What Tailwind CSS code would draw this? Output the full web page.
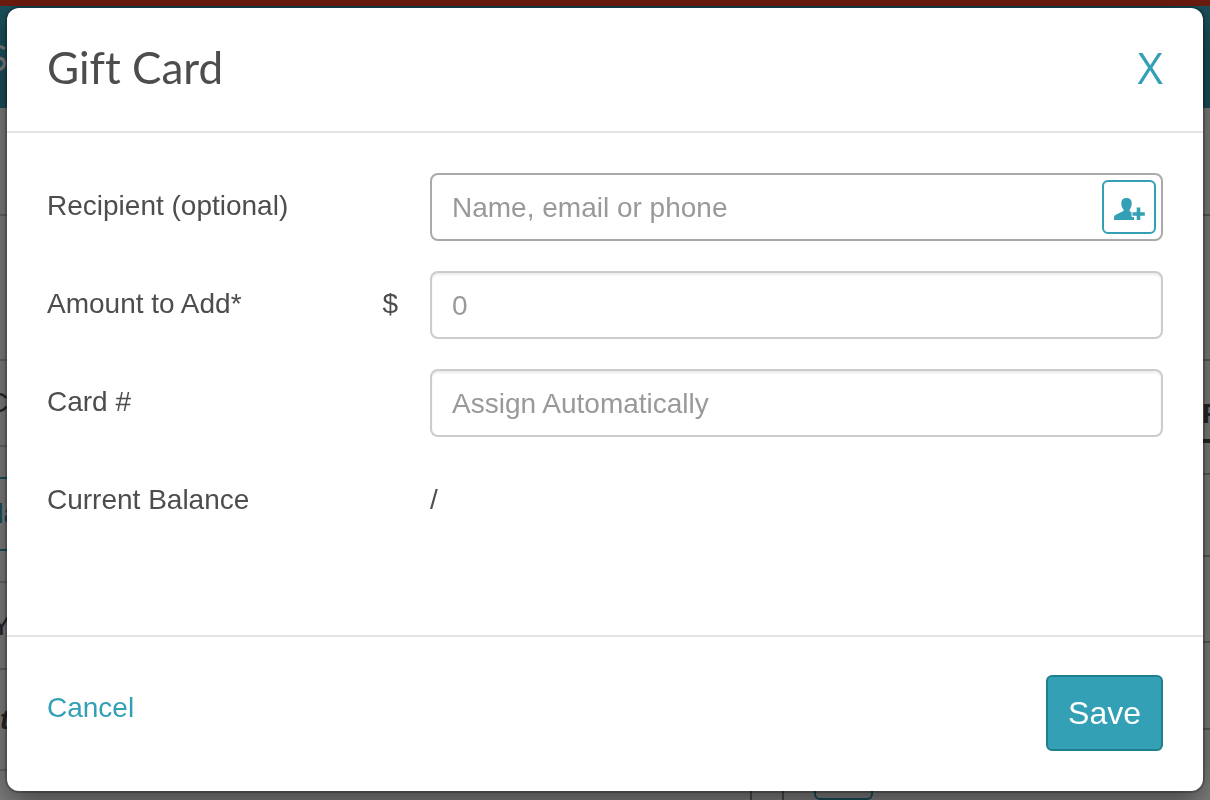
<!DOCTYPE html>
<html lang="en">
<head>
    <meta charset="UTF-8">
    <meta name="viewport" content="width=device-width, initial-scale=1.0">
    <title>Gift Card</title>
    <script src="https://cdn.jsdelivr.net/npm/@tailwindcss/browser@4"></script>
</head>
<body class="h-screen overflow-hidden bg-white font-['Liberation_Sans',Arial,sans-serif] text-[28px] leading-[42px] text-[#4d4d4d]">

    <!-- Page behind the dialog -->
    <div class="flex h-screen flex-col overflow-hidden" aria-hidden="true">
        <div class="h-[6px] shrink-0 bg-[#d9391e]"></div>
        <div class="flex h-[102px] shrink-0 items-center bg-[#34a0b5]">
            <span class="-ml-3 font-['Lato',sans-serif] text-[36px] text-white">S</span>
        </div>
        <div class="flex grow justify-between">
            <div class="w-10 overflow-hidden text-[#4d4d4d]">
                <div class="h-[108px] border-b-2 border-[#cccccc]"></div>
                <div class="h-[145px] border-b-2 border-[#cccccc]"></div>
                <div class="flex h-[86px] items-center border-b-2 border-[#cccccc]"><span class="-ml-3">C</span></div>
                <div class="mt-[30px] flex h-[74px] items-center border-y-2 border-[#34a0b5] text-[#34a0b5]"><span class="-ml-1 font-bold">la</span></div>
                <div class="h-8 border-b-2 border-[#cccccc]"></div>
                <div class="flex h-[87px] items-center border-b-2 border-[#cccccc]"><span class="-ml-2">Y</span></div>
                <div class="flex h-[101px] items-center border-b-2 border-[#cccccc]"><span class="font-bold italic">t</span></div>
            </div>
            <div class="flex grow items-end pl-[710px]">
                <div class="h-3 w-[34px] border-x-2 border-[#999999]"></div>
                <div class="ml-[30px] h-10 w-[59px] rounded-md border-2 border-[#34a0b5]"></div>
            </div>
            <div class="w-2 overflow-hidden text-[#4d4d4d]">
                <div class="h-[108px] border-b-2 border-[#bbbbbb]"></div>
                <div class="h-[145px] border-b-2 border-[#bbbbbb]"></div>
                <div class="flex h-[82px] items-end border-b-4 border-[#4d4d4d] pb-1 font-bold"><span>P</span></div>
                <div class="h-8 border-b-2 border-[#bbbbbb]"></div>
                <div class="h-[82px] border-b-2 border-[#bbbbbb]"></div>
                <div class="h-[86px] border-b-2 border-[#bbbbbb]"></div>
                <div class="h-[87px] border-b-2 border-[#bbbbbb]"></div>
            </div>
        </div>
    </div>

    <!-- Backdrop and dialog -->
    <div class="fixed inset-0 bg-black/50 px-[7px] pt-2 pb-[9px]">
        <form role="dialog" aria-labelledby="title" class="flex h-full flex-col rounded-xl bg-white shadow-[0_0_0_2px_rgba(0,0,0,0.2),0_10px_30px_rgba(0,0,0,0.5)]">
            <header class="flex items-center justify-between border-b-2 border-[#e5e5e5] px-10 pt-[30px] pb-[34px] text-[44px] leading-[59px]">
                <h1 id="title" class="font-['Lato',sans-serif] font-normal [font-variant-ligatures:none]">Gift Card</h1>
                <button type="button" aria-label="Close" class="font-['Open_Sans',sans-serif] text-[#34a0b5]">X</button>
            </header>

            <div class="flex grow flex-col gap-[30px] px-10 pt-10">
                <div class="flex">
                    <label for="recipient" class="w-[383px] shrink-0 pt-3">Recipient (optional)</label>
                    <div class="flex h-[68px] grow items-center rounded-lg border-2 border-[#aaaaaa] pr-[5px]">
                        <input id="recipient" type="text" placeholder="Name, email or phone" class="h-full min-w-0 grow px-5 pt-0.5 outline-none placeholder:text-[#999999]">
                        <button type="button" aria-label="Add customer" class="flex h-[54px] w-[54px] items-center justify-center rounded-md border-2 border-[#34a0b5] text-[#34a0b5]">
                            <svg class="mt-1 h-6 w-8" viewBox="0 0 32 24" fill="currentColor">
                                <path d="M13.500 1c3.300 0 5.200 1.800 5.200 5 0 2.800-.7 5-2 6.500v1.800l1.800 1v4.700h2.500V23H1v-2.200c0-1.600.8-2.700 2.300-3.300l6.600-3.200c.7-.4.900-1 .6-1.800C9 11 8.300 8.800 8.300 6c0-3.200 1.900-5 5.200-5z"/>
                                <path d="M23.700 10.500h3.600v4.700h4.500v3.600h-4.500V23h-3.600v-4.200h-4.200v-3.600h4.200z"/>
                            </svg>
                        </button>
                    </div>
                </div>
                <div class="flex">
                    <label for="amount" class="flex w-[383px] shrink-0 justify-between pt-3 pr-8">Amount to Add* <span>$</span></label>
                    <input id="amount" type="text" placeholder="0" class="h-[68px] min-w-0 grow rounded-lg border-2 border-[#cccccc] px-5 pt-0.5 shadow-[inset_0_2px_2px_rgba(0,0,0,0.075)] outline-none placeholder:text-[#999999]">
                </div>
                <div class="flex">
                    <label for="card" class="w-[383px] shrink-0 pt-3">Card #</label>
                    <input id="card" type="text" placeholder="Assign Automatically" class="h-[68px] min-w-0 grow rounded-lg border-2 border-[#cccccc] px-5 pt-0.5 shadow-[inset_0_2px_2px_rgba(0,0,0,0.075)] outline-none placeholder:text-[#999999]">
                </div>
                <div class="flex pt-3">
                    <span class="w-[383px] shrink-0">Current Balance</span>
                    <span>/</span>
                </div>
            </div>

            <footer class="flex items-start justify-between border-t-2 border-[#e5e5e5] px-10 pt-[38px] pb-10">
                <a href="#" class="mt-3 text-[#34a0b5]">Cancel</a>
                <button type="submit" class="h-[76px] rounded-md border-2 border-[#1f7f8c] bg-[#34a0b5] px-5 text-[32px] text-white">Save</button>
            </footer>
        </form>
    </div>
</body>
</html>
